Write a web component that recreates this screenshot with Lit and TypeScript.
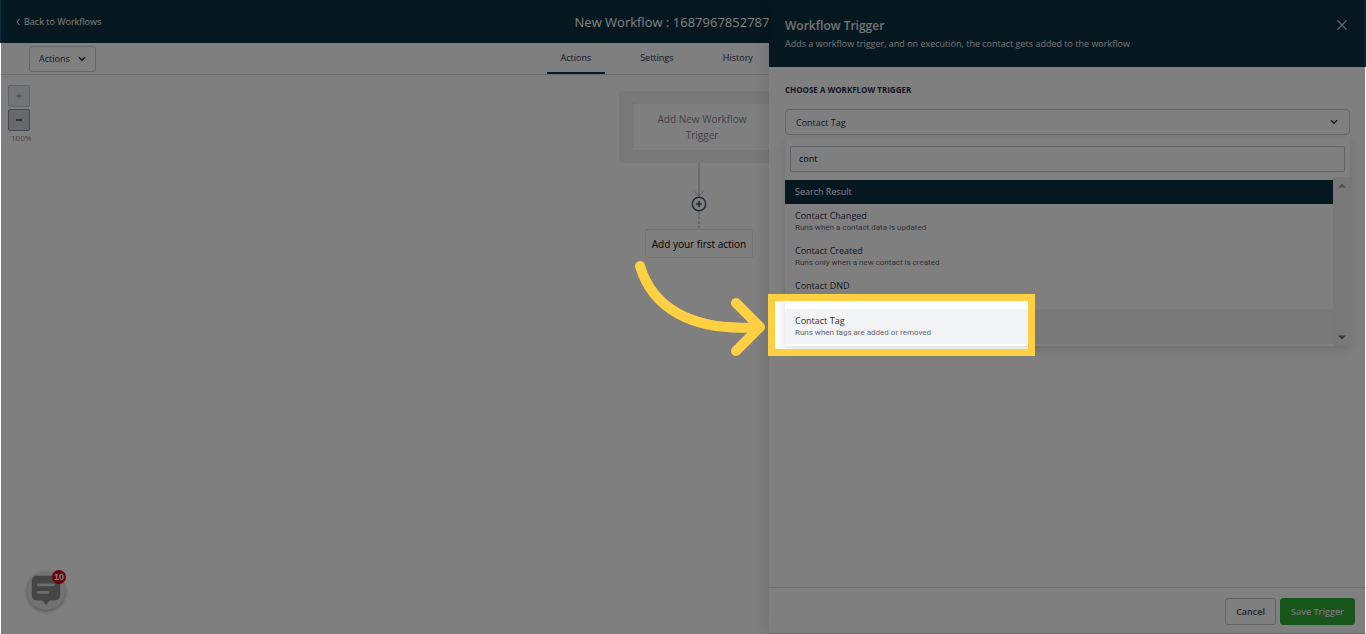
import { LitElement, html, css, svg } from "lit";
import { customElement, state } from "lit/decorators.js";

interface TriggerOption {
  name: string;
  hint: string;
}

const OPTIONS: TriggerOption[] = [
  { name: "Contact Changed", hint: "Runs when a contact data is updated" },
  { name: "Contact Created", hint: "Runs only when a new contact is created" },
  { name: "Contact DND", hint: "Runs when a contact's DND flag is updated" },
  { name: "Contact Tag", hint: "Runs when tags are added or removed" },
];

const TABS = ["Actions", "Settings", "History"];

const chevron = (cls: string) => html`<svg class=${cls} viewBox="0 0 8 6" aria-hidden="true">
  ${svg`<path d="M1 1.2 4 4.2 7 1.2" fill="none" stroke="currentColor" stroke-width="1.6"/>`}
</svg>`;

@customElement("app-root")
export class AppRoot extends LitElement {
  @state() private selected = "Contact Tag";
  @state() private tab = "Actions";

  static styles = css`
    :host {
      display: block;
      font-family: "Open Sans", "Noto Sans", sans-serif;
      font-size: 9px;
      line-height: 12px;
      color: #2a2e45;
    }
    * {
      box-sizing: border-box;
    }
    button,
    input,
    select {
      font: inherit;
      color: inherit;
      margin: 0;
    }
    button {
      cursor: pointer;
    }
    h1,
    h2,
    p,
    ul {
      margin: 0;
      padding: 0;
    }
    .page {
      position: relative;
      display: flex;
      flex-direction: column;
      min-height: 100vh;
      overflow: hidden;
      background: #fff;
    }
    .top {
      display: flex;
      align-items: center;
      height: 43px;
      padding: 0 16px;
      background: #0b2f3f;
      color: #fff;
    }
    .back {
      display: flex;
      flex: 1;
      align-items: center;
      gap: 4px;
      color: inherit;
      font-weight: 500;
      text-decoration: none;
    }
    .back svg {
      width: 4px;
      height: 8px;
    }
    .name {
      font-size: 13px;
      line-height: 18px;
      font-weight: 400;
    }
    .top-end {
      flex: 1;
      padding-right: 22px;
    }
    .bar {
      display: flex;
      align-items: center;
      height: 32px;
      padding-left: 29px;
      border-bottom: 1px solid #dcdde0;
    }
    .menu {
      display: flex;
      align-items: center;
      gap: 8px;
      height: 26px;
      padding: 0 9px;
      background: #fff;
      border: 1px solid #c9cad6;
      border-radius: 3px;
    }
    .chev {
      width: 8px;
      height: 6px;
    }
    .tabs {
      display: flex;
      align-self: stretch;
      justify-content: center;
      gap: 23px;
      flex: 1;
      padding-right: 148px;
    }
    .tab {
      min-width: 58px;
      padding: 0;
      background: none;
      border: 0;
      border-bottom: 2px solid transparent;
    }
    .tab.on {
      border-bottom-color: #0b2f3f;
    }
    .canvas {
      display: flex;
      flex: 1;
      justify-content: center;
      position: relative;
      padding: 16px 0 0 32px;
    }
    .zoom {
      position: absolute;
      left: 8px;
      top: 10px;
      display: grid;
      gap: 2px;
      font-size: 8px;
      line-height: 10px;
      color: #8b8b93;
    }
    .zoom button {
      width: 22px;
      height: 22px;
      padding: 0;
      background: #cfd2d9;
      border: 1px solid #8a8fa6;
      border-radius: 2px;
      color: #45464c;
    }
    .zoom button:disabled {
      background: #e6e8ec;
      border-color: #c4c7d0;
      color: #a5a7ad;
    }
    .zoom svg {
      display: block;
      width: 8px;
      height: 8px;
      margin: auto;
    }
    .zoom span {
      padding-left: 3px;
    }
    .flow {
      display: flex;
      flex-direction: column;
      align-items: center;
    }
    .start {
      margin: 0 -6px 0 0;
      padding: 12px 14px;
      border-radius: 4px;
      background: #f0f0f0;
    }
    .start button {
      width: 138px;
      height: 48px;
      padding: 0 16px;
      background: #fff;
      border: 1px dotted #dcdde0;
      color: #85858f;
      font-size: 10px;
      line-height: 16px;
    }
    .link {
      display: block;
      width: 16px;
      height: 66px;
    }
    .first {
      height: 29px;
      padding: 0 6px;
      background: #fff;
      border: 1px dotted #d5d5d8;
      border-radius: 2px;
      color: #000;
      font-size: 10px;
    }
    .chat {
      position: absolute;
      left: 27px;
      bottom: 24px;
      width: 38px;
      height: 38px;
      padding: 0;
      border: 0;
      border-radius: 19px;
      background: #e4e4e4;
      box-shadow: 0 1px 4px rgba(0, 0, 0, 0.4);
    }
    .chat svg {
      display: block;
      width: 38px;
      height: 38px;
    }
    .badge {
      position: absolute;
      right: -1px;
      top: -2px;
      width: 14px;
      height: 14px;
      border-radius: 7px;
      background: #d00010;
      color: #fff;
      font: 700 9px/14px "Liberation Sans", sans-serif;
      text-align: center;
    }
    .drawer {
      position: absolute;
      inset: 0 0 0 auto;
      width: 597px;
      max-width: 100%;
      display: flex;
      flex-direction: column;
      background: #fff;
      box-shadow: 0 0 16px rgba(0, 0, 0, 0.16);
    }
    .drawer-head {
      display: flex;
      align-items: flex-start;
      justify-content: space-between;
      height: 67px;
      padding: 18px 18px 0 16px;
      background: #0b2f3f;
      color: #e6e6e8;
    }
    .drawer-head h2 {
      margin-bottom: 4px;
      font-size: 12px;
      line-height: 16px;
      font-weight: 600;
    }
    .close {
      width: 12px;
      height: 12px;
      padding: 0;
      background: none;
      border: 0;
      color: #c8c8dc;
    }
    .close svg {
      display: block;
      width: 12px;
      height: 12px;
    }
    .body {
      flex: 1;
      padding: 17px 16px 0;
    }
    .caption {
      display: block;
      margin-bottom: 13px;
      font-size: 8px;
      font-weight: 700;
    }
    .choice {
      display: grid;
      align-items: center;
    }
    .choice > * {
      grid-area: 1 / 1;
    }
    .choice svg {
      justify-self: end;
      margin-right: 12px;
      pointer-events: none;
    }
    .choice select {
      appearance: none;
      width: 100%;
      height: 26px;
      padding: 1px 10px 0;
      background: #fff;
      border: 1px solid #c8c8cc;
      border-radius: 4px;
    }
    .drop {
      margin-top: 3px;
      border-radius: 3px;
      background: #fff;
      box-shadow: 0 4px 12px rgba(0, 0, 0, 0.14);
    }
    .find {
      padding: 8px 5px 5px;
    }
    .find input {
      display: block;
      width: 100%;
      height: 26px;
      padding: 0 8px 1px;
      background: #fff;
      border: 1px solid #c4c5d2;
      border-radius: 2px;
      color: #000;
      outline: 0;
    }
    .results {
      display: flex;
    }
    .list {
      flex: 1;
      padding: 3px 0 2px;
      list-style: none;
    }
    .list-head {
      height: 24px;
      padding: 6px 10px;
      background: #0b2f3f;
      color: #fff;
    }
    .opt {
      display: block;
      width: 100%;
      height: 35px;
      padding: 6px 10px 5px;
      background: none;
      border: 0;
      text-align: left;
    }
    .opt.on {
      background: #f2f3f5;
    }
    .opt span {
      display: block;
    }
    .opt .hint {
      color: #666773;
      font-family: Roboto, "Open Sans", sans-serif;
      font-size: 8px;
    }
    .scroll {
      display: flex;
      flex-direction: column;
      justify-content: space-between;
      align-items: center;
      width: 17px;
      padding: 6px 0;
      background: #f1f1f1;
    }
    .scroll svg {
      width: 8px;
      height: 5px;
    }
    .foot {
      display: flex;
      justify-content: flex-end;
      gap: 4px;
      padding: 10px 11px 8px;
      border-top: 1px solid #e0e0e2;
      border-bottom: 1px solid #dcdcdf;
    }
    .foot button {
      height: 27px;
      padding: 0 10px;
      background: #fff;
      border: 1px solid #c6c6cc;
      border-radius: 3px;
      font-weight: 600;
      color: #4a4a58;
    }
    .foot .save {
      background: #2faa35;
      border-color: #2faa35;
      color: #e8e8e8;
    }
    .guide {
      position: absolute;
      inset: 0 1px;
      overflow: hidden;
      pointer-events: none;
    }
    .spot {
      position: absolute;
      right: 330px;
      top: 294px;
      width: 267px;
      height: 62px;
      border: 7px solid #ffd042;
      box-shadow: 0 0 0 3000px rgba(0, 0, 0, 0.5);
    }
    .arrow {
      position: absolute;
      right: 599px;
      top: 255px;
      width: 136px;
      height: 106px;
    }
  `;

  render() {
    return html`<div class="page">
      <header class="top">
        <a class="back" href="#workflows"
          ><svg viewBox="0 0 4 8" aria-hidden="true">
            <path d="M3.6 1 .8 4l2.8 3" fill="none" stroke="currentColor" />
          </svg>
          Back to Workflows</a
        >
        <h1 class="name">New Workflow : 1687967852787</h1>
        <div class="top-end"></div>
      </header>
      <nav class="bar">
        <button class="menu">Actions ${chevron("chev")}</button>
        <div class="tabs">
          ${TABS.map(
            (t) => html`<button class="tab ${t === this.tab ? "on" : ""}" @click=${() => (this.tab = t)}>${t}</button>`
          )}
        </div>
      </nav>
      <main class="canvas">
        <div class="zoom">
          <button disabled aria-label="Zoom in">
            <svg viewBox="0 0 8 8"><path d="M1.5 4h5M4 1.5v5" stroke="currentColor" stroke-width="1.3" /></svg>
          </button>
          <button aria-label="Zoom out">
            <svg viewBox="0 0 8 8"><path d="M1 4h6" stroke="currentColor" stroke-width="1.5" /></svg>
          </button>
          <span>100%</span>
        </div>
        <div class="flow">
          <div class="start"><button>Add New Workflow Trigger</button></div>
          <svg class="link" viewBox="0 0 16 66" aria-hidden="true">
            <path d="M8 0v33M3.5 28.500 8 33l4.500-4.500" fill="none" stroke="#b5b6ba" />
            <path d="M8 49v17" stroke="#a5a6aa" stroke-dasharray="3 1.500" />
            <circle cx="8" cy="41" r="6.700" fill="#fff" stroke="#40536f" stroke-width="1.400" />
            <path d="M5 41h6M8 38v6" stroke="#40536f" stroke-width="1.700" />
          </svg>
          <button class="first">Add your first action</button>
        </div>
      </main>

      <button class="chat" aria-label="Open chat">
        <svg viewBox="0 0 40 40">
          <path
            d="M11 4h18q6 0 6 6v14q0 6-6 6h-5l-4 4.500-4-4.500h-5q-6 0-6-6V10q0-6 6-6z"
            fill="#8a8a8a"
          />
          <path d="M12 13.500h16M12 21.500h10" stroke="#dcdcdc" stroke-width="3" stroke-linecap="round" />
        </svg>
        <span class="badge">10</span>
      </button>

      <aside class="drawer">
        <header class="drawer-head">
          <div>
            <h2>Workflow Trigger</h2>
            <p>Adds a workflow trigger, and on execution, the contact gets added to the workflow</p>
          </div>
          <button class="close" aria-label="Close">
            <svg viewBox="0 0 12 12"><path d="m1.500 2.500 9 9M10.500 2.500l-9 9" stroke="currentColor" stroke-width="1.200" /></svg>
          </button>
        </header>
        <div class="body">
          <label class="caption" for="trigger">CHOOSE A WORKFLOW TRIGGER</label>
          <div class="choice">
            <select id="trigger" .value=${this.selected}>
              ${OPTIONS.map((o) => html`<option ?selected=${o.name === this.selected}>${o.name}</option>`)}
            </select>
            ${chevron("chev")}
          </div>
          <div class="drop">
            <div class="find"><input type="text" aria-label="Search triggers" value="cont" /></div>
            <div class="results">
              <ul class="list">
                <li class="list-head">Search Result</li>
                ${OPTIONS.map(
                  (o) => html`<li>
                    <button class="opt ${o.name === this.selected ? "on" : ""}" @click=${() => (this.selected = o.name)}>
                      <span>${o.name}</span><span class="hint">${o.hint}</span>
                    </button>
                  </li>`
                )}
              </ul>
              <div class="scroll" aria-hidden="true">
                <svg viewBox="0 0 8 5"><path d="M0 4.500 4 .500l4 4z" fill="#a0a0a0" /></svg>
                <svg viewBox="0 0 8 5"><path d="M0 .500 4 4.500l4-4z" fill="#707070" /></svg>
              </div>
            </div>
          </div>
        </div>
        <footer class="foot">
          <button>Cancel</button>
          <button class="save">Save Trigger</button>
        </footer>
      </aside>

      <div class="guide" aria-hidden="true">
        <div class="spot"></div>
        <svg class="arrow" viewBox="0 0 136 106">
          <path
            d="M10 11C22 52 61 77 128 72M106 48l24 24-24 24"
            fill="none"
            stroke="#ffd042"
            stroke-width="10"
            stroke-linecap="round"
            stroke-linejoin="round"
          />
        </svg>
      </div>
    </div>`;
  }
}
